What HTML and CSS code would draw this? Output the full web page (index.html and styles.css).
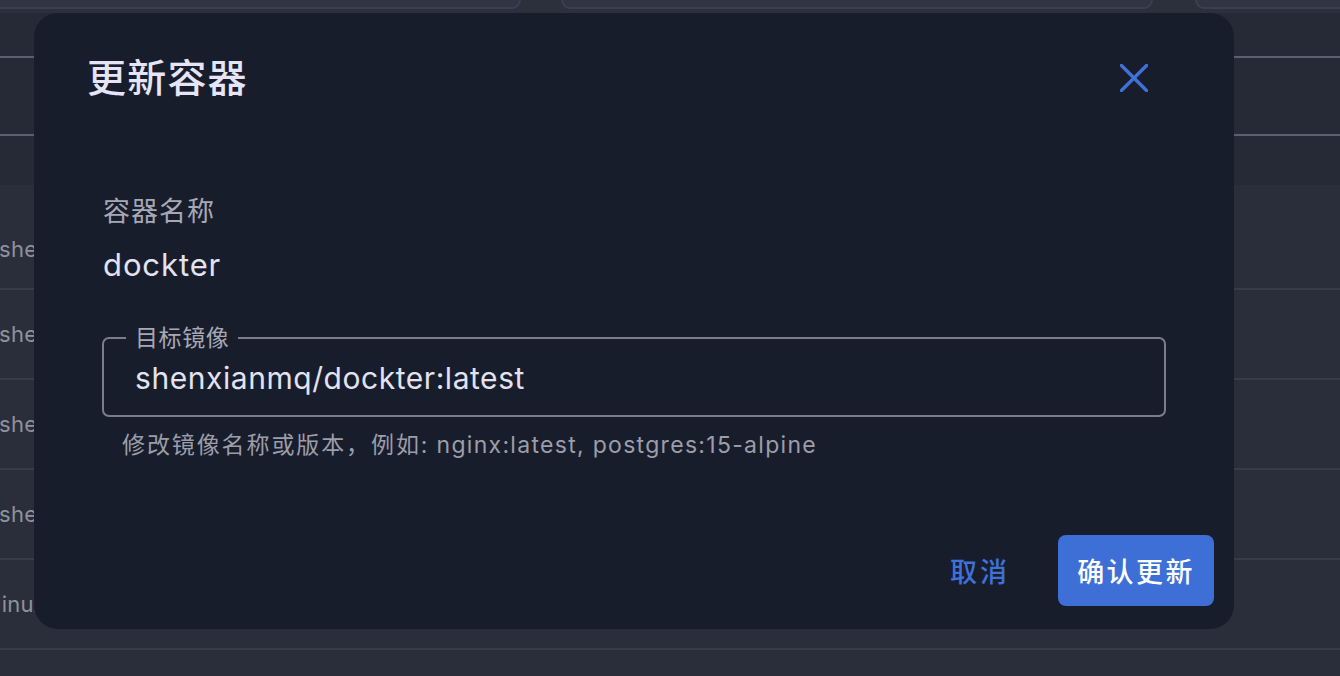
FILE: index.html
```html
<!DOCTYPE html>
<html lang="zh-CN">
<head>
<meta charset="utf-8">
<title>更新容器</title>
<link rel="stylesheet" href="styles.css">
</head>
<body>
<div class="page">
  <div class="topstrip">
    <div class="tcard tcard-a"></div>
    <div class="tcard tcard-b"></div>
    <div class="tcard tcard-c"></div>
  </div>
  <div class="toolbar"></div>
  <div class="thead"></div>
  <div class="tgap"></div>
  <div class="tbody">
    <div class="row row-first"><span class="cell">shenxianmq/dockter:latest</span></div>
    <div class="row"><span class="cell">shenxianmq/file-server:latest</span></div>
    <div class="row"><span class="cell">shenxianmq/media-hub:latest</span></div>
    <div class="row"><span class="cell">shenxianmq/notify:latest</span></div>
    <div class="row"><span class="cell cell-linux">linuxserver/qbittorrent:latest</span></div>
    <div class="row"></div>
  </div>
</div>

<div class="dialog" role="dialog" aria-label="更新容器">
  <div class="dlg-head">
    <h2 class="dlg-title">更新容器</h2>
    <button class="close-btn" aria-label="关闭">
      <svg width="28" height="28" viewBox="0 0 28 28" fill="none">
        <path d="M1.5 1.5 L26.5 26.5 M26.5 1.5 L1.5 26.5" stroke="#3f71d8" stroke-width="3.4" stroke-linecap="square"/>
      </svg>
    </button>
  </div>
  <div class="dlg-body">
    <div class="field-label">容器名称</div>
    <div class="field-value">dockter</div>
    <fieldset class="outlined">
      <legend class="outlined-legend">目标镜像</legend>
      <div class="outlined-input">shenxianmq/dockter:latest</div>
    </fieldset>
    <div class="hint">修改镜像名称或版本，例如<span class="hint-latin">: nginx:latest, postgres:15-alpine</span></div>
  </div>
  <div class="dlg-actions">
    <button class="btn btn-text">取消</button>
    <button class="btn btn-primary">确认更新</button>
  </div>
</div>
</body>
</html>
```
FILE: styles.css
```css
html, body {
  margin: 0;
  padding: 0;
}
body {
  width: 1340px;
  height: 676px;
  overflow: hidden;
  background: #262a36;
  font-family: Inter, "Noto Sans CJK SC", sans-serif;
  position: relative;
}
.page {
  height: 676px;
  overflow: hidden;
  display: flex;
  flex-direction: column;
}
.topstrip {
  height: 13px;
  background: #2b303c;
  display: flex;
  position: relative;
  flex: none;
}
.tcard {
  height: 7px;
  background: #2f3543;
  border: 2px solid #3b4050;
  border-top: none;
  border-radius: 0 0 18px 18px;
  flex: none;
}
.tcard-a { margin-left: -20px; width: 537px; }
.tcard-b { margin-left: 40px; width: 588px; }
.tcard-c { margin-left: 42px; width: 200px; }

.toolbar {
  height: 43px;
  border-bottom: 2px solid #5c5f6f;
  flex: none;
}
.thead {
  height: 76px;
  border-bottom: 2px solid #5c5f6f;
  flex: none;
}
.tgap {
  height: 49px;
  flex: none;
}
.tbody {
  background: #2a2e3a;
  flex: 1;
}
.row {
  height: 88px;
  border-bottom: 2px solid #383c48;
  display: flex;
  align-items: center;
}
.row-first {
  padding-top: 24px;
  box-sizing: border-box;
  height: 105px;
}
.cell {
  font-size: 22px;
  color: #8f919c;
  white-space: nowrap;
  margin-left: -1px;
  letter-spacing: 0.3px;
}
.cell-linux {
  margin-left: -4px;
}

/* dialog */
.dialog {
  position: absolute;
  left: 34px;
  top: 13px;
  width: 1200px;
  height: 616px;
  box-sizing: border-box;
  background: #181d2c;
  border-radius: 24px;
  display: flex;
  flex-direction: column;
}
.dlg-head {
  display: flex;
  align-items: center;
  justify-content: space-between;
  padding: 42px 86px 0 53px;
}
.dlg-title {
  margin: 0;
  font-size: 39px;
  line-height: 46px;
  font-weight: 500;
  color: #e6e4f7;
  letter-spacing: 1.2px;
}
.close-btn {
  background: none;
  border: none;
  padding: 0;
  width: 28px;
  height: 28px;
  display: flex;
  cursor: pointer;
}
.dlg-body {
  padding: 93px 68px 0 68px;
  display: flex;
  flex-direction: column;
}
.field-label {
  font-size: 27px;
  line-height: 36px;
  color: #a7a8b5;
  padding-left: 1px;
  letter-spacing: 1px;
}
.field-value {
  margin-top: 15px;
  font-size: 31px;
  line-height: 40px;
  color: #e3e2f1;
  padding-left: 1px;
  letter-spacing: 0.9px;
}
.outlined {
  margin: 41px 0 0 0;
  padding: 8px 0 17px 22px;
  border: 2px solid #7a7d8a;
  border-radius: 7px;
  min-width: 0;
}
.outlined-legend {
  padding: 0 9px;
  font-size: 23px;
  line-height: 24px;
  color: #a7a8b5;
  letter-spacing: 0.6px;
}
.outlined-input {
  padding-left: 9px;
  font-size: 30px;
  line-height: 40px;
  color: #e3e2f1;
  letter-spacing: 0.55px;
}
.hint {
  margin-top: 13px;
  padding-left: 20px;
  font-size: 23px;
  line-height: 30px;
  color: #9c9da9;
  letter-spacing: 1.9px;
  white-space: nowrap;
}
.hint-latin {
  letter-spacing: 1.3px;
}
.dlg-actions {
  margin-top: auto;
  display: flex;
  justify-content: flex-end;
  align-items: center;
  gap: 16px;
  padding: 0 20px 23px 0;
}
.btn {
  height: 71px;
  border: none;
  border-radius: 8px;
  font-family: Inter, "Noto Sans CJK SC", sans-serif;
  font-size: 27px;
  font-weight: 500;
  letter-spacing: 2.4px;
  padding: 0 18px;
  cursor: pointer;
}
.btn-text {
  background: transparent;
  color: #3f71d8;
  padding: 0 32px 0 38px;
  letter-spacing: 3px;
}
.btn-primary {
  background: #3d6fd6;
  color: #ffffff;
  width: 156px;
  padding: 0;
}
```
